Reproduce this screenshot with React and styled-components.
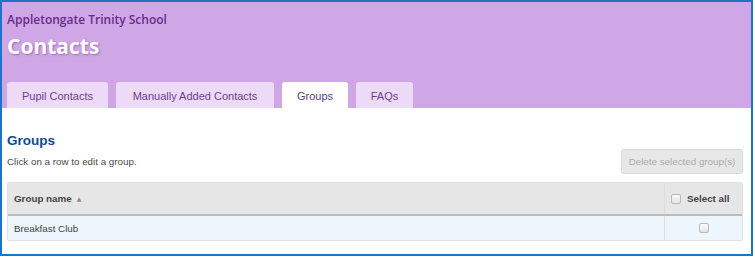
import styled, { createGlobalStyle } from "styled-components";

const Global = createGlobalStyle`
    body {
        margin: 0;
        background: #fff;
        font-family: "Liberation Sans", Arial, sans-serif;
    }
`;

const Frame = styled.div`
    box-sizing: border-box;
    width: 753px;
    height: 256px;
    border: 2px solid #1c74c8;
    display: flex;
    flex-direction: column;
    overflow: hidden;
`;

const Header = styled.header`
    background-color: #cfa7e6;
    height: 106px;
    padding: 0 5px;
    display: flex;
    flex-direction: column;
`;

const School = styled.div`
    font-family: "Open Sans", sans-serif;
    font-weight: 600;
    font-size: 12px;
    color: #6a2b8c;
    margin-top: 9px;
    line-height: 18px;
`;

const Title = styled.h1`
    font-family: "Open Sans", sans-serif;
    font-weight: 700;
    font-size: 21px;
    color: #fff;
    margin: 3px 0 0;
    line-height: 28px;
    text-shadow: 1px 1px 2px rgba(90, 40, 120, 0.45);
`;

const Tabs = styled.nav`
    margin-top: auto;
    display: flex;
    gap: 8px;
`;

const Tab = styled.div`
    height: 26px;
    width: ${p => p.w}px;
    box-sizing: border-box;
    border-radius: 3px 3px 0 0;
    background-color: ${p => (p.active ? "#fff" : "#eddaf6")};
    color: ${p => (p.active ? "#5b3d7c" : "#6b3f8f")};
    font-size: 11px;
    display: flex;
    align-items: center;
    justify-content: center;
    padding-top: 1px;
`;

const Content = styled.main`
    padding: 0 8px 0 5px;
    display: flex;
    flex-direction: column;
`;

const SectionTitle = styled.h2`
    margin: 24px 0 0;
    font-size: 13.5px;
    font-weight: 700;
    color: #0d4a94;
    line-height: 18px;
`;

const Toolbar = styled.div`
    display: flex;
    align-items: flex-end;
    justify-content: space-between;
    margin-top: -1px;
`;

const Hint = styled.p`
    margin: 0 0 7px;
    font-size: 9.8px;
    color: #4a4a4a;
`;

const Button = styled.button`
    width: 122px;
    height: 25px;
    border: 1px solid #d9d9d9;
    border-radius: 3px;
    background: #e7e7e7;
    color: #ababab;
    font-family: "Liberation Sans", Arial, sans-serif;
    font-size: 9.8px;
    padding: 0;
`;

const Table = styled.div`
    margin-top: 8px;
    border: 1px solid #e2e2e2;
    border-radius: 2px;
`;

const Row = styled.div`
    display: grid;
    grid-template-columns: 1fr 78px;
    height: ${p => (p.head ? 31 : 24)}px;
    background-color: ${p => (p.head ? "#e6e6e6" : "#eef6fd")};
    border-bottom: ${p => (p.head ? "2px solid #bcbcbc" : "none")};
`;

const Cell = styled.div`
    display: flex;
    align-items: center;
    justify-content: ${p => (p.center ? "center" : "flex-start")};
    padding: 0 6px;
    gap: 6px;
    font-size: 9.8px;
    font-weight: ${p => (p.bold ? 700 : 400)};
    color: #444;
    border-left: ${p => (p.divide ? "1px solid #dcdcdc" : "none")};
`;

const SortArrow = styled.span`
    font-family: "DejaVu Sans", sans-serif;
    font-size: 6px;
    color: #8a8a8a;
    margin-left: -1px;
`;

const Check = styled.input.attrs({ type: "checkbox" })`
    appearance: none;
    width: 10px;
    height: 10px;
    margin: 0;
    border: 1px solid #b9b9b9;
    border-radius: 2px;
    background: linear-gradient(#fbfbfb, #e4e4e4);
    box-sizing: border-box;
`;

export default function App() {
    const tabs = [
        { label: "Pupil Contacts", w: 101 },
        { label: "Manually Added Contacts", w: 158 },
        { label: "Groups", w: 66, active: true },
        { label: "FAQs", w: 57 },
    ];
    return (
        <Frame>
            <Global />
            <Header>
                <School>Appletongate Trinity School</School>
                <Title>Contacts</Title>
                <Tabs>
                    {tabs.map(t => (
                        <Tab key={t.label} w={t.w} active={t.active}>{t.label}</Tab>
                    ))}
                </Tabs>
            </Header>
            <Content>
                <SectionTitle>Groups</SectionTitle>
                <Toolbar>
                    <Hint>Click on a row to edit a group.</Hint>
                    <Button disabled>Delete selected group(s)</Button>
                </Toolbar>
                <Table>
                    <Row head>
                        <Cell bold>Group name<SortArrow>▲</SortArrow></Cell>
                        <Cell bold divide><Check />Select all</Cell>
                    </Row>
                    <Row>
                        <Cell>Breakfast Club</Cell>
                        <Cell divide center><Check /></Cell>
                    </Row>
                </Table>
            </Content>
        </Frame>
    );
}
